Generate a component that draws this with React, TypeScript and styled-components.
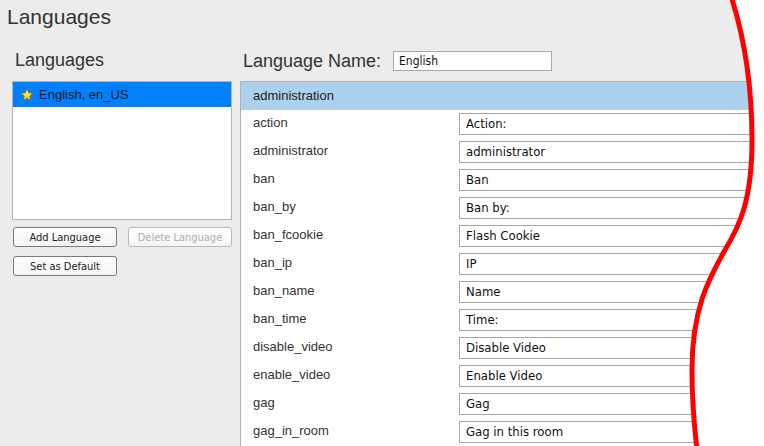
import styled, { createGlobalStyle } from "styled-components";

const GlobalStyle = createGlobalStyle`
  html, body {
    margin: 0;
    padding: 0;
    background: #ececec;
  }
  body {
    font-family: "Liberation Sans", Arial, sans-serif;
    color: #333;
    overflow: hidden;
  }
`;

const Page = styled.div`
  position: relative;
  width: 764px;
  height: 446px;
  overflow: hidden;
`;

const Title = styled.h1`
  margin: 0;
  padding: 5px 0 0 7px;
  font-size: 21px;
  line-height: 24px;
  font-weight: normal;
  color: #333;
`;

const Main = styled.div`
  display: flex;
  gap: 8px;
  padding: 21px 0 0 12px;
`;

const Sidebar = styled.div`
  width: 220px;
  flex: none;
  display: flex;
  flex-direction: column;
`;

const Heading = styled.h2`
  margin: 0 0 11px;
  padding-left: 3px;
  font-size: 18px;
  line-height: 20px;
  font-weight: normal;
  color: #333;
`;

const LangList = styled.ul`
  list-style: none;
  margin: 0;
  padding: 0;
  height: 137px;
  background: #fff;
  border: 1px solid #b4b4b4;
`;

const LangItem = styled.li<{ $selected?: boolean }>`
  display: flex;
  align-items: center;
  gap: 5px;
  height: 25px;
  padding-left: 7px;
  font-size: 13px;
  color: #1a1a1a;
  background: ${(p) => (p.$selected ? "#0080ff" : "transparent")};
`;

const ButtonGrid = styled.div`
  display: grid;
  grid-template-columns: 104px 104px;
  column-gap: 11px;
  row-gap: 9px;
  margin-top: 7px;
  padding-left: 1px;
`;

const Button = styled.button`
  height: 20px;
  padding: 0;
  background: linear-gradient(#ffffff, #f4f4f4);
  border: 1px solid #7a7a7a;
  border-radius: 3px;
  font-family: "DejaVu Sans Condensed", "DejaVu Sans", sans-serif;
  font-size: 11px;
  color: #222;
  &:disabled {
    color: #b0b0b0;
    border-color: #b8b8b8;
  }
`;

const Content = styled.div`
  flex: 1;
  display: flex;
  flex-direction: column;
  min-width: 0;
`;

const NameRow = styled.div`
  display: flex;
  align-items: center;
  height: 20px;
  margin: 1px 0 10px;
`;

const NameLabel = styled.label`
  width: 150px;
  padding-left: 3px;
  font-size: 18px;
  line-height: 20px;
  color: #333;
`;

const TextBox = styled.input<{ $width?: string }>`
  box-sizing: border-box;
  width: ${(p) => p.$width || "100%"};
  height: 20px;
  padding: 0 5px;
  border: 1px solid #a8a8a8;
  background: #fff;
  font-family: "DejaVu Sans Condensed", "DejaVu Sans", sans-serif;
  font-size: 12px;
  color: #111;
  outline: none;
`;

const Table = styled.div`
  border-left: 1px solid #b0b0b0;
  border-top: 1px solid #b0b0b0;
  background: #fff;
  height: 400px;
`;

const GroupHeader = styled.div`
  box-sizing: border-box;
  height: 28px;
  display: flex;
  align-items: center;
  padding: 0 0 2px 12px;
  background: #acd1ee;
  font-size: 13px;
  color: #222;
`;

const Row = styled.div`
  display: grid;
  grid-template-columns: 206px 1fr;
  align-items: center;
  height: 28px;
  padding-left: 12px;
`;

const Key = styled.span`
  font-size: 13px;
  color: #333;
  margin-top: -3px;
`;

const ValueBox = styled(TextBox)`
  height: 22px;
  width: 400px;
  font-size: 13px;
  padding: 0 6px;
  margin-top: -1px;
`;

const Tear = styled.svg`
  position: absolute;
  left: 0;
  top: 0;
  pointer-events: none;
`;

const rows: [string, string][] = [
  ["action", "Action:"],
  ["administrator", "administrator"],
  ["ban", "Ban"],
  ["ban_by", "Ban by:"],
  ["ban_fcookie", "Flash Cookie"],
  ["ban_ip", "IP"],
  ["ban_name", "Name"],
  ["ban_time", "Time:"],
  ["disable_video", "Disable Video"],
  ["enable_video", "Enable Video"],
  ["gag", "Gag"],
  ["gag_in_room", "Gag in this room"],
];

function Star() {
  return (
    <svg width="14" height="14" viewBox="0 0 14 14">
      <defs>
        <linearGradient id="starFill" x1="0" y1="0" x2="0" y2="1">
          <stop offset="0" stopColor="#fff7a0" />
          <stop offset="1" stopColor="#f2c400" />
        </linearGradient>
      </defs>
      <path
        d="M7 0.8 L8.8 4.9 L13.2 5.2 L9.8 8.1 L10.9 12.6 L7 10.2 L3.1 12.6 L4.2 8.1 L0.8 5.2 L5.2 4.9 Z"
        fill="url(#starFill)"
        stroke="#8a6a10"
        strokeWidth="0.8"
        strokeLinejoin="round"
      />
    </svg>
  );
}

const edge =
  "M731,-4 C742,30 752,80 752,140 C752,200 740,225 725,250 C708,280 692,310 692,370 C692,410 695,430 697,450";

export default function App() {
  return (
    <Page>
      <GlobalStyle />
      <Title>Languages</Title>
      <Main>
        <Sidebar>
          <Heading>Languages</Heading>
          <LangList>
            <LangItem $selected>
              <Star />
              English, en_US
            </LangItem>
          </LangList>
          <ButtonGrid>
            <Button>Add Language</Button>
            <Button disabled>Delete Language</Button>
            <Button>Set as Default</Button>
          </ButtonGrid>
        </Sidebar>
        <Content>
          <NameRow>
            <NameLabel>Language Name:</NameLabel>
            <TextBox $width="159px" defaultValue="English" />
          </NameRow>
          <Table>
            <GroupHeader>administration</GroupHeader>
            {rows.map(([k, v]) => (
              <Row key={k}>
                <Key>{k}</Key>
                <ValueBox defaultValue={v} />
              </Row>
            ))}
          </Table>
        </Content>
      </Main>
      <Tear width="764" height="446" viewBox="0 0 764 446">
        <path d={`${edge} L770,450 L770,-4 Z`} fill="#fff" />
        <path d={edge} fill="none" stroke="#ff0000" strokeWidth="5" />
      </Tear>
    </Page>
  );
}
